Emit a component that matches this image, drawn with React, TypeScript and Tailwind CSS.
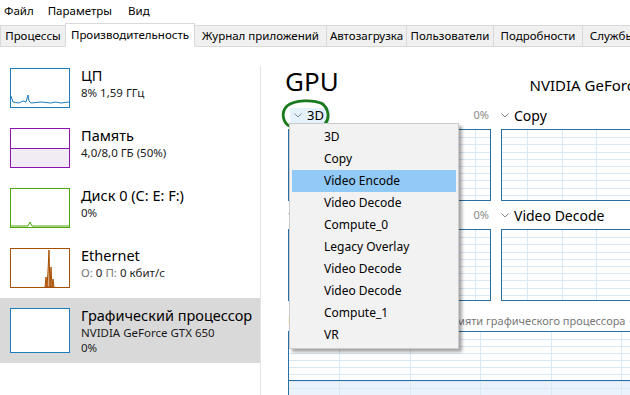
import React from 'react';

const font = { fontFamily: '"Noto Sans", "Liberation Sans", sans-serif' };

// grid graph used in the GPU panel
const Graph = ({
  w,
  h,
  dx,
  ox,
  dy,
  level,
}: {
  w: number;
  h: number;
  dx: number;
  ox: number;
  dy: number;
  level?: number;
}) => {
  const vs: number[] = [];
  for (let x = ox; x < w; x += dx) vs.push(x);
  const hs: number[] = [];
  for (let y = dy; y < h; y += dy) hs.push(y);
  return (
    <div className="border border-[#2a6fa3] bg-white" style={{ width: w, height: h }}>
      <svg width={w - 2} height={h - 2} className="block">
        {level !== undefined && <rect x={0} y={level} width={w} height={h} fill="#eaf3fb" />}
        {hs.map((y) => (
          <line key={'h' + y} x1={0} x2={w} y1={Math.round(y) + 0.5} y2={Math.round(y) + 0.5} stroke="#d8e8f5" />
        ))}
        {vs.map((x) => (
          <line key={'v' + x} y1={0} y2={h} x1={Math.round(x) + 0.5} x2={Math.round(x) + 0.5} stroke="#d8e8f5" />
        ))}
        {level !== undefined && (
          <line x1={0} x2={w} y1={level + 0.5} y2={level + 0.5} stroke="#2a6fa3" />
        )}
      </svg>
    </div>
  );
};

const Chevron = () => (
  <svg width="8" height="5" viewBox="0 0 8 5" className="shrink-0">
    <path d="M0.5 0.5 L4 4 L7.5 0.5" fill="none" stroke="#8a8a8a" strokeWidth="1" />
  </svg>
);

const Thumb = ({ color, h = 40, children }: { color: string; h?: number; children?: React.ReactNode }) => (
  <div className="w-[60px] mt-[10px] border bg-white shrink-0" style={{ borderColor: color, height: h }}>
    <svg width="58" height={h - 2} viewBox={`0 0 58 ${h - 2}`} className="block">
      {children}
    </svg>
  </div>
);

const SideItem = ({
  thumb,
  title,
  lines,
  selected,
}: {
  thumb: React.ReactNode;
  title: string;
  lines: React.ReactNode[];
  selected?: boolean;
}) => (
  <div className={`flex gap-[11px] pl-[10px] ${selected ? 'bg-[#d9d9d9] h-[65px]' : 'h-[60px]'}`}>
    {thumb}
    <div className="mt-[7px] text-black whitespace-nowrap">
      <div className="text-[14.5px] leading-[20px]">{title}</div>
      {lines.map((l, i) => (
        <div key={i} className="text-[11.5px] leading-[15px] text-[#1a1a1a]">
          {l}
        </div>
      ))}
    </div>
  </div>
);

const tabs = [
  { t: 'Процессы', w: 66 },
  { t: 'Производительность', w: 130, active: true },
  { t: 'Журнал приложений', w: 133 },
  { t: 'Автозагрузка', w: 81 },
  { t: 'Пользователи', w: 88 },
  { t: 'Подробности', w: 90 },
  { t: 'Службы', w: 60 },
];

const menuItems = [
  '3D',
  'Copy',
  'Video Encode',
  'Video Decode',
  'Compute_0',
  'Legacy Overlay',
  'Video Decode',
  'Video Decode',
  'Compute_1',
  'VR',
];

export default function App() {
  return (
    <div className="w-[630px] h-[395px] overflow-hidden bg-white relative text-black" style={font}>
      {/* menu bar */}
      <div className="h-[22px] flex items-center text-[11.5px] pl-[4px]">
        <span>Файл</span>
        <span className="ml-[14px]">Параметры</span>
        <span className="ml-[16px]">Вид</span>
      </div>

      {/* tabs */}
      <div className="h-[25px] flex items-end border-b border-[#d9d9d9] text-[11.5px]">
        {tabs.map((tab) => (
          <div
            key={tab.t}
            style={{ width: tab.w }}
            className={`shrink-0 flex items-center justify-center whitespace-nowrap overflow-hidden border border-[#d9d9d9] -mr-px ${
              tab.active ? 'h-[24px] bg-white border-b-white -mb-px relative z-10' : 'h-[21px] bg-[#f0f0f0] border-b-0'
            }`}
          >
            {tab.t}
          </div>
        ))}
      </div>

      <div className="flex h-[348px]">
        {/* left list */}
        <div className="w-[260px] shrink-0 pt-[11px]">
          <SideItem
            title="ЦП"
            lines={['8%  1,59 ГГц']}
            thumb={
              <Thumb color="#1c7dbc">
                <polyline
                  points="0,27 2,33 8,34 12,32 15,33 17,26 18,32 20,34 30,33 40,34 44,33 50,34 58,33"
                  fill="none"
                  stroke="#1c7dbc"
                />
              </Thumb>
            }
          />
          <SideItem
            title="Память"
            lines={['4,0/8,0 ГБ (50%)']}
            thumb={
              <Thumb color="#8b12ae">
                <rect x="0" y="19" width="58" height="19" fill="#f1ecf3" />
                <line x1="0" x2="58" y1="19.5" y2="19.5" stroke="#8b12ae" />
              </Thumb>
            }
          />
          <SideItem
            title="Диск 0 (C: E: F:)"
            lines={['0%']}
            thumb={
              <Thumb color="#4da60c">
                <polyline points="0,37 17,37 19,33 21,37 58,37" fill="none" stroke="#4da60c" />
              </Thumb>
            }
          />
          <SideItem
            title="Ethernet"
            lines={[
              <>
                <span className="text-[#777]">О:</span> 0 <span className="text-[#777]">П:</span> 0 кбит/с
              </>,
            ]}
            thumb={
              <Thumb color="#a74f01">
                <polygon
                  points="34,38 35,28 36,38 37,22 38,1 39,38 40,18 41,38 42,30 43,38"
                  fill="#e0ae88"
                  stroke="#a74f01"
                  strokeWidth="1"
                />
              </Thumb>
            }
          />
          <SideItem
            title="Графический процессор"
            lines={['NVIDIA GeForce GTX 650', '0%']}
            selected
            thumb={<Thumb color="#1c7dbc" h={45} />}
          />
        </div>

        <div className="w-px bg-[#e3e3e3] mt-[19px] shrink-0" />

        {/* GPU panel */}
        <div className="pl-[27px] pt-[18px] w-[440px] shrink-0">
          <div className="w-[416px] flex items-baseline justify-between whitespace-nowrap">
            <span className="text-[26px] leading-[32px] -ml-[3px]">GPU</span>
            <span className="text-[15px]">NVIDIA GeForce GTX 650</span>
          </div>

          <div className="mt-[10px] grid grid-cols-[203px_203px] gap-x-[10px] gap-y-[6px]">
            {[
              ['3D', 'Copy'],
              ['Video Encode', 'Video Decode'],
            ].map((row, ri) => (
              <React.Fragment key={ri}>
                {row.map((name, ci) => {
                  const act = ri === 0 && ci === 0;
                  return (
                    <div key={name}>
                      <div className="h-[22px] pb-[5px] flex items-center justify-between">
                        <div
                          className={`flex items-center gap-[5px] h-[15px] ${
                            act ? 'bg-[#e5f1fb] ml-[2px] pl-[4px] pr-[6px]' : ''
                          }`}
                        >
                          <Chevron />
                          <span className={act ? 'text-[13px]' : 'text-[14px]'}>{name}</span>
                        </div>
                        <span className="text-[11px] text-[#8a8a8a] pr-[2px]">0%</span>
                      </div>
                      <Graph w={203} h={72} dx={34.5} ox={ci === 0 ? 13 : 25} dy={7.2} />
                    </div>
                  );
                })}
              </React.Fragment>
            ))}
          </div>

          <div className="mt-[12px] text-[11px] leading-[16px] text-[#777] whitespace-nowrap">
            Использование выделенной памяти графического процессора
          </div>
          <div className="mt-[2px]">
            <Graph w={416} h={80} dx={70.5} ox={50} dy={7} level={48} />
          </div>
        </div>
      </div>

      {/* hand drawn circle */}
      <svg className="absolute left-[280px] top-[99px]" width="52" height="34" viewBox="0 0 52 34">
        <path
          d="M43 5 C33 0 14 1 7 7 C1 13 2 24 11 28 C21 33 39 32 45 25 C50 19 49 9 41 4"
          fill="none"
          stroke="#1b7a1e"
          strokeWidth="2.8"
          strokeLinecap="round"
        />
      </svg>

      {/* dropdown */}
      <div className="absolute left-[289px] top-[123px] w-[170px] bg-[#f2f2f2] border border-[#cccccc] py-[2px] shadow-[3px_3px_3px_rgba(0,0,0,0.35)] z-20">
        {menuItems.map((m, i) => (
          <div
            key={i}
            className={`h-[22px] flex items-center pl-[32px] mx-[2px] text-[12px] ${i === 2 ? 'bg-[#91c9f7]' : ''}`}
          >
            {m}
          </div>
        ))}
      </div>
    </div>
  );
}
